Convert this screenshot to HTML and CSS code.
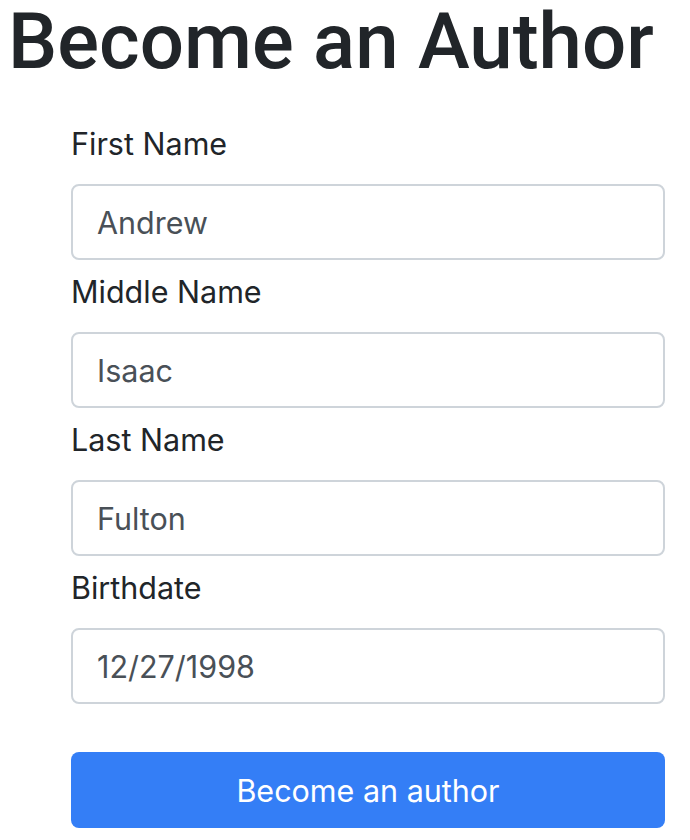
FILE: index.html
```html
<!DOCTYPE html>
<html>
<head>
<meta charset="utf-8">
<link rel="stylesheet" href="styles.css">
</head>
<body>
<h1 class="title">Become an Author</h1>
<form class="form">
  <div class="group">
    <label class="label">First Name</label>
    <input class="input" type="text" value="Andrew">
  </div>
  <div class="group">
    <label class="label">Middle Name</label>
    <input class="input" type="text" value="Isaac">
  </div>
  <div class="group">
    <label class="label">Last Name</label>
    <input class="input" type="text" value="Fulton">
  </div>
  <div class="group">
    <label class="label">Birthdate</label>
    <input class="input" type="text" value="12/27/1998">
  </div>
  <button class="btn" type="button">Become an author</button>
</form>
</body>
</html>
```
FILE: styles.css
```css
html, body {
  margin: 0;
  padding: 0;
  background: #fff;
}
body {
  padding: 0 8px;
  font-family: Inter, "Liberation Sans", sans-serif;
  color: #212529;
}
.title {
  font-family: Roboto, "Liberation Sans", Arial, sans-serif;
  font-weight: 500;
  font-size: 78px;
  line-height: 88px;
  margin: -2px 0 34px 0;
  color: #212529;
  white-space: nowrap;
}
.form {
  margin-left: 63px;
  width: 594px;
  display: flex;
  flex-direction: column;
}
.group {
  display: flex;
  flex-direction: column;
  margin-bottom: 8px;
}
.label {
  font-size: 30.5px;
  line-height: 48px;
  margin-bottom: 16px;
  color: #212529;
}
.input {
  box-sizing: border-box;
  height: 76px;
  width: 100%;
  border: 2px solid #ced4da;
  border-radius: 8px;
  padding: 0 24px;
  font-family: Inter, "Liberation Sans", sans-serif;
  font-size: 30.5px;
  color: #495057;
  background: #fff;
  outline: none;
}
.btn {
  margin-top: 40px;
  height: 76px;
  width: 100%;
  border: none;
  border-radius: 8px;
  background: #347ef6;
  color: #fff;
  font-family: Inter, "Liberation Sans", sans-serif;
  font-size: 30.5px;
}
```
